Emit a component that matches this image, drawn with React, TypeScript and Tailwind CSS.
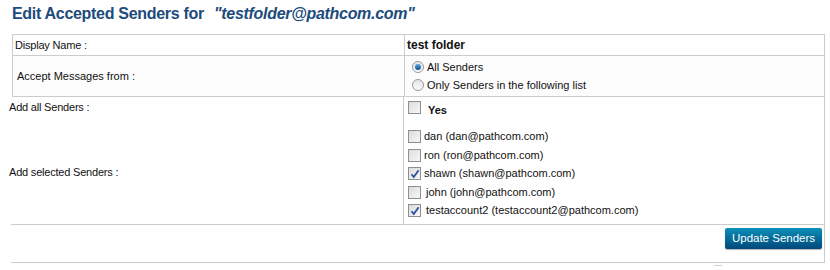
import React, { useState } from "react";

const senders = [
  { id: 1, name: "dan", email: "dan@pathcom.com", checked: false },
  { id: 2, name: "ron", email: "ron@pathcom.com", checked: false },
  { id: 3, name: "shawn", email: "shawn@pathcom.com", checked: true },
  { id: 4, name: "john", email: "john@pathcom.com", checked: false },
  { id: 5, name: "testaccount2", email: "testaccount2@pathcom.com", checked: true },
];

function Radio({ on }: { on: boolean }) {
  return (
    <span className="flex h-[12px] w-[12px] items-center justify-center rounded-full border border-[#9a9a9a] bg-gradient-to-b from-[#e6e6e6] to-[#fafafa]">
      {on && (
        <span className="h-[6px] w-[6px] rounded-full bg-gradient-to-b from-[#5fa8e0] to-[#0c4d92]" />
      )}
    </span>
  );
}

function Check({ on }: { on: boolean }) {
  return (
    <span className="flex h-[13px] w-[13px] shrink-0 items-center justify-center border border-[#8f8f8f] bg-gradient-to-br from-[#dcdcdc] to-[#f8f8f8]">
      {on && (
        <svg width="10" height="10" viewBox="0 0 10 10">
          <path d="M1.5 5.2 L3.8 8 L8.6 1.2" fill="none" stroke="#2f4f9e" strokeWidth="1.8" />
        </svg>
      )}
    </span>
  );
}

export default function App() {
  const [rows] = useState(senders);

  return (
    <div className="h-[270px] w-[830px] bg-white font-['Liberation_Sans',Arial,sans-serif] text-[11px] leading-[13px] text-[#111]">
      <h1 className="flex items-baseline gap-[10px] pl-[12px] pt-[2px] text-[16px] font-bold leading-[24px] tracking-[-0.3px] text-[#1c4b7c]">
        Edit Accepted Senders for
        <span className="italic">"testfolder@pathcom.com"</span>
      </h1>

      <div className="ml-[12px] mt-[8px] w-[813px] border border-[#cccccc]">
        <div className="flex h-[21px] border-b border-[#cccccc]">
          <div className="flex w-[392px] items-center border-r border-[#cccccc] pl-[2px] tracking-[-0.2px]">Display Name :</div>
          <div className="flex items-center pl-[2px] text-[12px] font-bold">test folder</div>
        </div>
        <div className="flex h-[40px] bg-[#fcfcfc]">
          <div className="flex w-[392px] items-center border-r border-[#cccccc] pl-[4px]">Accept Messages from :</div>
          <div className="flex flex-col justify-center gap-[5px] pl-[7px]">
            <label className="flex items-center gap-[3px]">
              <Radio on={true} />
              All Senders
            </label>
            <label className="flex items-center gap-[3px]">
              <Radio on={false} />
              Only Senders in the following list
            </label>
          </div>
        </div>
      </div>

      <div className="ml-[11px] w-[814px] border-r border-[#cccccc]">
        <div className="flex h-[128px] border-b border-[#cccccc]">
          <div className="relative w-[393px] border-r border-[#cccccc] tracking-[-0.2px]">
            <div className="absolute left-[-2px] top-[4px]">Add all Senders :</div>
            <div className="absolute left-[-2px] top-[69px]">Add selected Senders :</div>
          </div>
          <div className="flex flex-col pl-[4px] pt-[4px]">
            <label className="flex h-[13px] items-start gap-[7px]">
              <Check on={false} />
              <span className="relative top-[3px] font-bold">Yes</span>
            </label>
            <div className="mt-[16px] flex flex-col gap-[5.5px]">
              {rows.map((r) => (
                <label key={r.id} className="flex h-[13px] items-center gap-[3px]">
                  <Check on={r.checked} />
                  <span className={r.name === "john" || r.name === "testaccount2" ? "pl-[2px]" : ""}>
                    {r.name} ({r.email})
                  </span>
                </label>
              ))}
            </div>
          </div>
        </div>
        <div className="flex h-[38px] justify-end border-b border-[#cccccc] pr-[2px] pt-[3px]">
          <button className="h-[21px] w-[97px] rounded-[2px] bg-gradient-to-b from-[#0e90b8] to-[#03497c] text-[11.5px] text-white shadow-[0_1px_1px_rgba(0,0,0,0.3)]">
            Update Senders
          </button>
        </div>
      </div>
      <div className="ml-[714px] mt-[2px] h-[1px] w-[8px] bg-[#cfcfcf]" />
    </div>
  );
}
